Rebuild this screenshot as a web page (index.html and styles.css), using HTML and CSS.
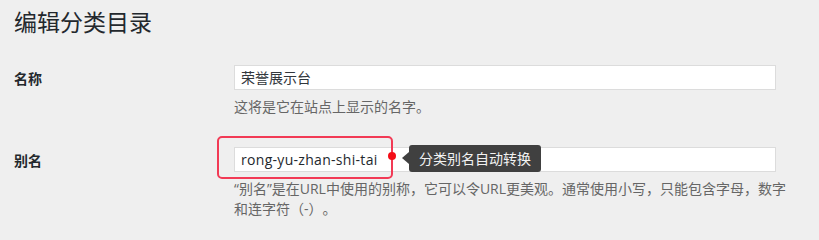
FILE: index.html
```html
<!DOCTYPE html>
<html lang="zh-CN">
<head>
<meta charset="utf-8">
<title>编辑分类目录</title>
<link rel="stylesheet" href="styles.css">
</head>
<body>
<div class="wrap">
  <h1 class="page-title">编辑分类目录</h1>
  <div class="form-row row-name">
    <label class="field-label">名称</label>
    <div class="field">
      <div class="input">荣誉展示台</div>
      <p class="description">这将是它在站点上显示的名字。</p>
    </div>
  </div>
  <div class="form-row row-slug">
    <label class="field-label">别名</label>
    <div class="field">
      <div class="input-wrap">
        <div class="input input-slug">rong-yu-zhan-shi-tai</div>
        <div class="highlight"></div>
        <span class="dot"></span>
        <div class="tip">分类别名自动转换</div>
      </div>
      <p class="description desc-wide">“别名”是在URL中使用的别称，它可以令URL更美观。通常使用小写，只能包含字母，数字和连字符（-）。</p>
    </div>
  </div>
</div>
</body>
</html>
```
FILE: styles.css
```css
html, body {
  margin: 0;
  padding: 0;
  background: #efefef;
}
body {
  font-family: "Open Sans", "Noto Sans CJK SC", sans-serif;
  font-size: 14px;
  color: #23282d;
  width: 819px;
  height: 235px;
  overflow: hidden;
  text-spacing-trim: space-all;
}
.wrap {
  padding: 8px 0 0 14px;
}
.page-title {
  margin: 0;
  font-size: 23px;
  font-weight: 400;
  line-height: 29px;
  color: #23282d;
}
.form-row {
  display: grid;
  grid-template-columns: 220px 570px;
  align-items: start;
}
.row-name {
  margin-top: 28px;
}
.row-slug {
  margin-top: 29px;
}
.field-label {
  font-weight: 700;
  line-height: 28px;
  color: #23282d;
}
.field {
  display: flex;
  flex-direction: column;
}
.input-wrap {
  position: relative;
  width: 542px;
}
.input {
  box-sizing: border-box;
  width: 542px;
  height: 25px;
  line-height: 23px;
  padding: 0 6px;
  background: #fff;
  border: 1px solid #dcdcdc;
  color: #32373c;
}
.input-slug {
  letter-spacing: 0.3px;
  color: #23282d;
}
.description {
  margin: 7px 0 0;
  line-height: 20.5px;
  color: #666;
}
.desc-wide {
  width: 558px;
}
.highlight {
  position: absolute;
  left: -17px;
  top: -11px;
  width: 176px;
  height: 43px;
  box-sizing: border-box;
  border: 2px solid #f23a55;
  border-radius: 5px;
}
.dot {
  position: absolute;
  left: 154px;
  top: 5px;
  width: 8px;
  height: 8px;
  border-radius: 50%;
  background: #f40d17;
}
.tip {
  position: absolute;
  left: 175px;
  top: -2px;
  height: 27px;
  line-height: 27px;
  padding: 0 10px 0 10px;
  background: #404040;
  color: #f2f2f2;
  border-radius: 3px;
  white-space: nowrap;
}
.tip::before {
  content: "";
  position: absolute;
  left: -7px;
  top: 7px;
  border-style: solid;
  border-width: 6.5px 7px 6.5px 0;
  border-color: transparent #404040 transparent transparent;
}
```
